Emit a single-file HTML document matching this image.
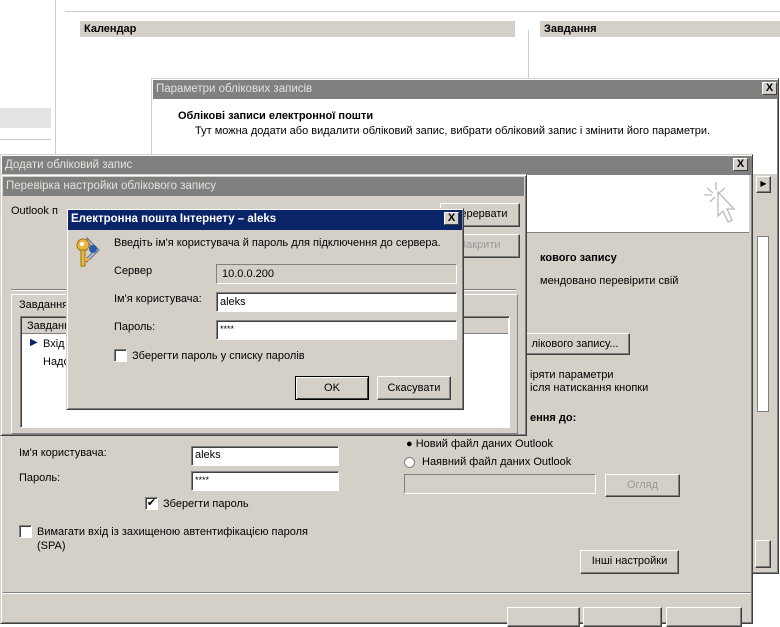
<!DOCTYPE html>
<html><head><meta charset="utf-8"><style>
*{box-sizing:border-box;margin:0;padding:0}
body{width:780px;height:614px;position:relative;overflow:hidden;background:#fff;font-family:"Liberation Sans","DejaVu Sans",sans-serif;font-size:11px;color:#000}
.a{position:absolute}
.win{position:absolute;background:#d4d0c8;border:1px solid;border-color:#d4d0c8 #404040 #404040 #d4d0c8;box-shadow:inset 1px 1px 0 #fff,inset -1px -1px 0 #808080}
.tt{position:absolute;background:#808080;color:#e4e2dc;font-size:11.5px;padding:3px 3px;height:19px;line-height:13px}
.btn{position:absolute;background:#d4d0c8;border:1px solid;border-color:#fff #404040 #404040 #fff;box-shadow:inset -1px -1px 0 #808080;text-align:center;line-height:20px}
.inp{position:absolute;background:#fff;border:1px solid;border-color:#808080 #fff #fff #808080;box-shadow:inset 1px 1px 0 #404040;padding-left:3px;line-height:16px}
.x{position:absolute;width:15px;height:13px;background:#d4d0c8;border:1px solid;border-color:#fff #404040 #404040 #fff;font-size:11px;line-height:11px;text-align:center;font-weight:bold}
.cb{position:absolute;width:13px;height:13px;background:#fff;border:1px solid;border-color:#808080 #fff #fff #808080;box-shadow:inset 1px 1px 0 #404040}
</style></head><body>
<div class="a" style="left:55px;top:0;width:1px;height:160px;background:#ccc"></div>
<div class="a" style="left:65px;top:11px;width:715px;height:1px;background:#ccc"></div>
<div class="a" style="left:0;top:108px;width:51px;height:20px;background:#e3e3e3"></div>
<div class="a" style="left:0;top:139px;width:51px;height:1px;background:#ccc"></div>
<div class="a" style="left:80px;top:21px;width:435px;height:16px;background:#d4d0c8;font-weight:bold;padding:2px 4px">Календар</div>
<div class="a" style="left:528px;top:30px;width:1px;height:50px;background:#ccc"></div>
<div class="a" style="left:540px;top:21px;width:240px;height:16px;background:#d4d0c8;font-weight:bold;padding:2px 4px">Завдання</div>

<div class="win" style="left:151px;top:78px;width:628px;height:496px"></div>
<div class="tt" style="left:153px;top:80px;width:624px">Параметри облікових записів</div>
<div class="x" style="left:762px;top:82px">X</div>
<div class="a" style="left:153px;top:99px;width:624px;height:75px;background:#fff"></div>
<div class="a" style="left:178px;top:110px;font-weight:bold">Облікові записи електронної пошти</div>
<div class="a" style="left:195px;top:125px">Тут можна додати або видалити обліковий запис, вибрати обліковий запис і змінити його параметри.</div>
<div class="btn" style="left:756px;top:176px;width:15px;height:17px;line-height:14px;font-size:8px">▶</div>
<div class="a" style="left:757px;top:236px;width:12px;height:176px;background:#fff;border:1px solid #808080"></div>
<div class="btn" style="left:755px;top:540px;width:16px;height:28px"></div>

<div class="win" style="left:0;top:154px;width:753px;height:470px"></div>
<div class="tt" style="left:2px;top:156px;width:749px">Додати обліковий запис</div>
<div class="x" style="left:733px;top:158px">X</div>
<div class="a" style="left:527px;top:175px;width:222px;height:58px;background:#fff;border-bottom:1px solid #808080"></div>
<svg class="a" style="left:700px;top:180px" width="40" height="48"><g stroke="#bbb" fill="none" stroke-width="1.3"><path d="M16 2v8M7 8l6 5M4 15h8M25 8l-6 5M10 22l5-5"/><path d="M18 12v24l5-5 5 11 4-2-5-11h7z" fill="#fff"/></g></svg>
<div class="a" style="left:540px;top:252px;font-weight:bold">кового запису</div>
<div class="a" style="left:540px;top:275px">мендовано перевірити свій</div>
<div class="btn" style="left:520px;top:333px;width:110px;height:22px">лікового запису...</div>
<div class="a" style="left:530px;top:369px;line-height:13px">іряти параметри<br>ісля натискання кнопки</div>
<div class="a" style="left:530px;top:412px;font-weight:bold">ення до:</div>
<div class="a" style="left:406px;top:438px">● Новий файл даних Outlook</div>
<div class="a" style="left:404px;top:457px;width:11px;height:11px;border-radius:50%;background:#fff;border:1px solid #808080"></div>
<div class="a" style="left:422px;top:456px">Наявний файл даних Outlook</div>
<div class="a" style="left:404px;top:474px;width:192px;height:20px;border:1px solid;border-color:#808080 #fff #fff #808080"></div>
<div class="btn" style="left:605px;top:474px;width:75px;height:23px;color:#999">Огляд</div>
<div class="btn" style="left:580px;top:550px;width:99px;height:24px;line-height:21px">Інші настройки</div>
<div class="a" style="left:3px;top:592px;width:748px;height:2px;border-top:1px solid #808080;border-bottom:1px solid #fff"></div>
<div class="btn" style="left:507px;top:607px;width:73px;height:20px"></div>
<div class="btn" style="left:583px;top:607px;width:79px;height:20px"></div>
<div class="btn" style="left:666px;top:607px;width:76px;height:20px"></div>
<div class="a" style="left:19px;top:447px">Ім'я користувача:</div>
<div class="inp" style="left:191px;top:446px;width:148px;height:20px">aleks</div>
<div class="a" style="left:19px;top:472px">Пароль:</div>
<div class="inp" style="left:191px;top:471px;width:148px;height:20px;font-size:9px">****</div>
<div class="cb" style="left:145px;top:497px;font-size:11px;line-height:10px;text-align:center">✔</div>
<div class="a" style="left:163px;top:498px">Зберегти пароль</div>
<div class="cb" style="left:19px;top:525px"></div>
<div class="a" style="left:37px;top:525px;line-height:14px">Вимагати вхід із захищеною автентифікацією пароля<br>(SPA)</div>

<div class="win" style="left:0;top:174px;width:527px;height:262px"></div>
<div class="tt" style="left:3px;top:177px;width:521px">Перевірка настройки облікового запису</div>
<div class="a" style="left:11px;top:205px">Outlook п</div>
<div class="btn" style="left:440px;top:203px;width:80px;height:24px">Перервати</div>
<div class="btn" style="left:440px;top:234px;width:80px;height:24px;color:#999">Закрити</div>
<div class="a" style="left:11px;top:289px;width:505px;height:2px;border-top:1px solid #808080;border-bottom:1px solid #fff"></div>
<div class="a" style="left:11px;top:294px;width:507px;height:140px;border:1px solid;border-color:#fff #808080 #808080 #fff"></div>
<div class="a" style="left:19px;top:299px">Завдання</div>
<div class="a" style="left:20px;top:316px;width:490px;height:112px;background:#fff;border:1px solid;border-color:#808080 #fff #fff #808080;box-shadow:inset 1px 1px 0 #404040"></div>
<div class="a" style="left:22px;top:318px;width:486px;height:16px;background:#d4d0c8;border-bottom:1px solid #808080;padding:2px 5px">Завдання</div>
<div class="a" style="left:30px;top:337px;color:#0a246a;font-size:10px">▶</div>
<div class="a" style="left:43px;top:338px">Вхід</div>
<div class="a" style="left:43px;top:356px">Надсилання</div>

<div class="win" style="left:66px;top:208px;width:398px;height:202px"></div>
<div class="a" style="left:68px;top:210px;width:394px;height:20px;background:#0a246a;color:#fff;font-weight:bold;font-size:11.5px;padding:3px 3px">Електронна пошта Інтернету – aleks</div>
<div class="x" style="left:444px;top:212px">X</div>
<svg class="a" style="left:73px;top:234px" width="34" height="34"><path d="M14 4l12 12-12 12-2-2 10-10-8-8z" fill="#b8c4e0" stroke="#667" stroke-width="1"/><circle cx="20" cy="15" r="4" fill="#2a5aa8"/><circle cx="10" cy="11" r="6" fill="#e8b840" stroke="#a07010"/><circle cx="9" cy="10" r="2" fill="#fff"/><rect x="8" y="16" width="4" height="16" fill="#e8b840" stroke="#a07010"/><rect x="12" y="24" width="4" height="3" fill="#e8b840"/></svg>
<div class="a" style="left:114px;top:237px">Введіть ім'я користувача й пароль для підключення до сервера.</div>
<div class="a" style="left:114px;top:265px">Сервер</div>
<div class="a" style="left:216px;top:264px;width:241px;height:20px;border:1px solid;border-color:#808080 #fff #fff #808080;padding:3px 5px">10.0.0.200</div>
<div class="a" style="left:114px;top:293px">Ім'я користувача:</div>
<div class="inp" style="left:216px;top:292px;width:241px;height:20px;line-height:18px">aleks</div>
<div class="a" style="left:114px;top:321px">Пароль:</div>
<div class="inp" style="left:216px;top:320px;width:241px;height:20px;font-size:9px">****</div>
<div class="cb" style="left:114px;top:349px"></div>
<div class="a" style="left:132px;top:350px">Зберегти пароль у списку паролів</div>
<div class="btn" style="left:295px;top:376px;width:74px;height:24px;border:1px solid #000;box-shadow:inset 1px 1px 0 #fff,inset -1px -1px 0 #404040;line-height:22px">OK</div>
<div class="btn" style="left:377px;top:376px;width:74px;height:24px;line-height:22px">Скасувати</div>
</body></html>
